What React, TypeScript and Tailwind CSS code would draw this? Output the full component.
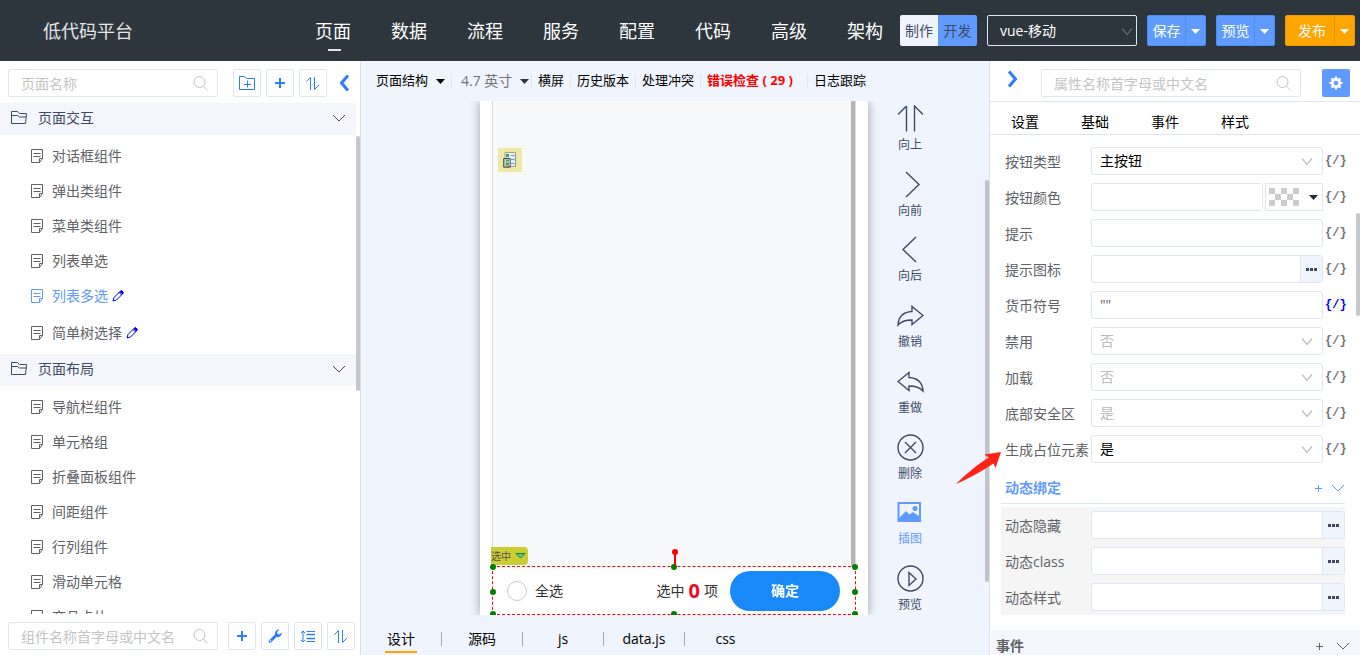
import { useState } from "react";
import type { ReactNode } from "react";
import clsx from "clsx";

const navItems = ["页面", "数据", "流程", "服务", "配置", "代码", "高级", "架构"];

const pageGroups = [
  {
    title: "页面交互",
    pages: [
      { name: "对话框组件" },
      { name: "弹出类组件" },
      { name: "菜单类组件" },
      { name: "列表单选" },
      { name: "列表多选", edited: true },
      { name: "简单树选择", edited: true },
    ],
  },
  {
    title: "页面布局",
    pages: [
      { name: "导航栏组件" },
      { name: "单元格组" },
      { name: "折叠面板组件" },
      { name: "间距组件" },
      { name: "行列组件" },
      { name: "滑动单元格" },
      { name: "商品卡片" },
    ],
  },
];

const editorTabs = ["设计", "源码", "js", "data.js", "css"];
const propertyTabs = ["设置", "基础", "事件", "样式"];
const dynamicProps = ["动态隐藏", "动态class", "动态样式"];

interface IconProps {
  className?: string;
  size?: number;
  box?: number;
  width?: number;
  children?: ReactNode;
}

function Icon({ className, size = 16, box = size, width = 1, children }: IconProps) {
  return (
    <svg
      className={clsx("shrink-0", className)}
      width={size}
      height={size}
      viewBox={`0 0 ${box} ${box}`}
      fill="none"
      stroke="currentColor"
      strokeWidth={width}
      aria-hidden="true"
    >
      {children}
    </svg>
  );
}

function SearchIcon() {
  return (
    <Icon size={16} className="text-[#c0c4cc]">
      <circle cx="6.500" cy="7" r="5.500" />
      <path d="M10.500 11l4 4.500" />
    </Icon>
  );
}

function SortIcon() {
  return (
    <Icon size={16}>
      <path d="M1.500 6.500l4-4V15M9.500 2v12.500L14 10" />
    </Icon>
  );
}

function PlusIcon({ size = 12, width = 2 }: { size?: number; width?: number }) {
  return (
    <Icon size={size} width={width}>
      <path d={size === 12 ? "M6 1v10M1 6h10" : "M4.500 1v7M1 4.500h7"} />
    </Icon>
  );
}

function FolderIcon() {
  return (
    <Icon size={18}>
      <path d="M1.500 14.500v-12h6l2 2h7l-1 10zM1.500 6.500h6l2 1.500h7" />
    </Icon>
  );
}

function FolderPlusIcon() {
  return (
    <Icon size={18}>
      <path d="M1.500 15.500v-13h5l2 2h8v11zM9.500 6.500v7M6 10.500h7" />
    </Icon>
  );
}

function PageIcon() {
  return (
    <Icon size={14}>
      <path d="M1.500.500h11v9l-3 4h-8zM3.500 4.500h7M3.500 7.500h7M12.500 9.500h-3v4" />
    </Icon>
  );
}

function PencilIcon() {
  return (
    <Icon size={12} className="text-[#0000e6]">
      <path d="M1 11l1-3.500 6-6 2.500 2.500-6 6zM7 2.500L9.500 5" />
      <path d="M8 1.500l1.500-1L11.500 2.500l-1 1.500z" fill="currentColor" />
    </Icon>
  );
}

function ChevronDown({ className }: { className?: string }) {
  return (
    <Icon size={14} className={className}>
      <path d="M1 4l6 6 6-6" />
    </Icon>
  );
}

function SelectArrow({ className }: { className?: string }) {
  return (
    <Icon size={12} width={1.2} className={clsx("pointer-events-none absolute top-1/2 -translate-y-1/2", className)}>
      <path d="M1 3.500l5 6 5-6" />
    </Icon>
  );
}

function Caret({ className }: { className?: string }) {
  return (
    <svg className={clsx("shrink-0", className)} width="9" height="5" viewBox="0 0 9 5" fill="currentColor" aria-hidden="true">
      <path d="M0 0h9L4.500 5z" />
    </svg>
  );
}

function Dots() {
  return (
    <svg width="11" height="3" viewBox="0 0 11 3" fill="#3d4a66" aria-hidden="true">
      <path d="M0 0h3v3H0zM4 0h3v3H4zM8 0h3v3H8z" />
    </svg>
  );
}

const tools = [
  { name: "向上", icon: <path d="M1 9.500L9 1.500M26 9.500L17.500 1v25.500M9.500 1v25.500" /> },
  { name: "向前", icon: <path d="M9 1l13 12.500L9 26" /> },
  { name: "向后", icon: <path d="M19 1L6 13.500 19 26" /> },
  {
    name: "撤销",
    icon: <path d="M15 4.500v5C6 10 1.500 15 1 23c3.500-4 7.500-5 14-5v4.500L26 13.500z" />,
  },
  {
    name: "重做",
    icon: <path d="M12 4.500v5c9 .500 13.500 5.500 14 13.500-3.500-4-7.500-5-14-5v4.500L1 13.500z" />,
  },
  {
    name: "删除",
    icon: (
      <>
        <circle cx="13.500" cy="13.500" r="12.500" />
        <path d="M8 8l11 11M19 8L8 19" />
      </>
    ),
  },
  {
    name: "插图",
    active: true,
    icon: (
      <>
        <path d="M1.500 4h21.500v18H1.500z" strokeWidth="2" />
        <path d="M2 19l7-7 3.500 3.500 3.500-2.500 6.500 4.500V22H2z" fill="currentColor" stroke="none" />
        <circle cx="18" cy="9.500" r="2.500" fill="currentColor" stroke="none" />
      </>
    ),
  },
  {
    name: "预览",
    icon: (
      <>
        <circle cx="13.500" cy="13.500" r="12.500" />
        <path d="M12 7.500v13l7-6.500z" />
      </>
    ),
  },
];

function IconButton({ label, children }: { label: string; children: ReactNode }) {
  return (
    <button
      type="button"
      aria-label={label}
      className="flex h-7 w-7 shrink-0 items-center justify-center rounded-xs border border-[#dfe5f2] bg-white text-[#2b7cff]"
    >
      {children}
    </button>
  );
}

function SearchBox({ placeholder, className }: { placeholder: string; className?: string }) {
  return (
    <label className={clsx("flex h-7 items-center rounded-xs border border-[#dfe5f2] bg-white pr-2 pl-3", className)}>
      <input
        type="text"
        aria-label={placeholder}
        placeholder={placeholder}
        className="min-w-0 flex-1 bg-transparent pt-0.5 text-sm outline-none placeholder:text-[#c4c4c4]"
      />
      <SearchIcon />
    </label>
  );
}

function SplitButton({ label, color = "blue" }: { label: string; color?: "blue" | "orange" }) {
  const orange = color === "orange";
  return (
    <div
      className={clsx(
        "flex h-[31px] rounded-xs border text-sm text-white",
        orange ? "border-[#f09a00] bg-[#ffa500]" : "border-[#4a8df8] bg-[#5f9bff]"
      )}
    >
      <button type="button" className={orange ? "w-12 pl-1" : "w-[37px]"}>
        {label}
      </button>
      <button
        type="button"
        aria-label={`${label}选项`}
        className={clsx("flex w-5 items-center justify-center border-l pt-0.5", orange ? "border-[#e89400]" : "border-[#4a8df8]")}
      >
        <Caret />
      </button>
    </div>
  );
}

function Header() {
  return (
    <header className="flex h-[61px] shrink-0 items-center bg-[#2e363d] pr-[5px] text-white">
      <h1 className="ml-[43px] w-[272px] text-lg text-[#e4e6e8]">低代码平台</h1>
      <nav className="flex flex-1 gap-10 text-lg">
        {navItems.map((item, i) => (
          <a key={item} href="#" className="relative w-9 whitespace-nowrap">
            {item}
            {i === 0 && <span className="absolute -bottom-1.5 left-[13px] h-0.5 w-[13px] bg-[#e3e0f2]" />}
          </a>
        ))}
      </nav>
      <div className="flex items-center gap-2.5">
        <div className="flex h-[31px] overflow-hidden rounded-xs text-sm text-[#3d4a66]">
          <button type="button" className="w-[38px] bg-[#f0f4fd]">制作</button>
          <button type="button" className="w-[39px] bg-[#5f9bff]">开发</button>
        </div>
        <div className="relative">
          <select
            aria-label="应用类型"
            className="h-[31px] w-[150px] appearance-none rounded-xs border border-[#dfe5f2] bg-transparent pl-3 text-sm"
          >
            <option>vue-移动</option>
          </select>
          <SelectArrow className="right-1 text-[#626b73]" />
        </div>
        <SplitButton label="保存" />
        <SplitButton label="预览" />
        <SplitButton label="发布" color="orange" />
      </div>
    </header>
  );
}

function PagePanel() {
  const [selected, setSelected] = useState("列表多选");

  return (
    <aside className="relative flex w-[361px] shrink-0 flex-col border-r border-[#dcdfe4] bg-white">
      <div className="flex h-[42px] shrink-0 items-center gap-[5px] pt-0.5 pl-2">
        <SearchBox placeholder="页面名称" className="mr-2.5 w-[210px] shrink-0" />
        <IconButton label="新建目录"><FolderPlusIcon /></IconButton>
        <IconButton label="新建页面"><PlusIcon /></IconButton>
        <IconButton label="排序"><SortIcon /></IconButton>
        <button type="button" aria-label="收起" className="ml-1 text-[#2b7cff]">
          <Icon size={18} width={3}>
            <path d="M12 1.500L5.500 9l6.500 7.500" />
          </Icon>
        </button>
      </div>

      <div className="min-h-0 flex-1 overflow-hidden">
        {pageGroups.map((group) => (
          <section key={group.title}>
            <h2 className="mr-1 flex h-8 items-center bg-[#f4f6fc] px-2.5 pb-0.5 text-sm text-[#3d4a66]">
              <FolderIcon />
              <span className="ml-2.5 flex-1">{group.title}</span>
              <ChevronDown />
            </h2>
            <ul className="pt-[3px] pb-0.5">
              {group.pages.map((page) => (
                <li key={page.name} className={page.edited ? "mb-0.5" : undefined}>
                  <button
                    type="button"
                    onClick={() => setSelected(page.name)}
                    className={clsx(
                      "flex h-[35px] w-full items-center pl-[30px] text-sm",
                      selected === page.name ? "text-[#5f9bff]" : "text-[#606266]"
                    )}
                  >
                    <PageIcon />
                    <span className="mr-1 ml-2">{page.name}</span>
                    {page.edited && <PencilIcon />}
                  </button>
                </li>
              ))}
            </ul>
          </section>
        ))}
      </div>

      <div className="flex h-[41px] shrink-0 items-center gap-[5px] pt-0.5 pr-1 pl-2">
        <SearchBox placeholder="组件名称首字母或中文名" className="mr-[5px] w-[210px] shrink-0" />
        <IconButton label="新建组件"><PlusIcon /></IconButton>
        <IconButton label="设置">
          <Icon size={16}>
            <path
              d="M2 14.500l1.500.500 6-6c2 .500 4.500-.500 5-2.500l.500-2-2.500 2-2-.500-.500-2L12.500 1.500C10 1 8 3 8 5.500L7.500 7 1.500 13z"
              fill="currentColor"
              stroke="none"
            />
            <circle cx="3.500" cy="13" r="0.800" fill="#fff" stroke="none" />
          </Icon>
        </IconButton>
        <IconButton label="行距">
          <Icon size={16}>
            <path d="M3 3v11M1 5l2-2 2 2M1 12l2 2 2-2M6.500 3.500H15M6.500 13.500H15" />
            <path d="M6.500 6.500H15M6.500 10.500H15" strokeWidth="1.500" />
          </Icon>
        </IconButton>
        <IconButton label="排序"><SortIcon /></IconButton>
      </div>

      <div className="absolute top-[75px] right-0 h-[255px] w-1 rounded-full bg-[#c5c7ca]" />
    </aside>
  );
}

function Divider() {
  return <span className="h-3.5 w-px bg-[#dfe5f2]" />;
}

function Toolbar() {
  return (
    <div className="flex h-10 shrink-0 items-center gap-1.5 pl-[15px] text-[13px] whitespace-nowrap text-black">
      <button type="button" className="flex items-center gap-2">
        页面结构
        <Caret />
      </button>
      <Divider />
      <div className="relative -mr-1 ml-[3px]">
        <select aria-label="屏幕尺寸" className="w-[68px] appearance-none bg-transparent text-sm text-[#707378]">
          <option>4.7 英寸</option>
        </select>
        <Caret className="pointer-events-none absolute top-2 right-0 text-[#2e3348]" />
      </div>
      <Divider />
      <button type="button">横屏</button>
      <Divider />
      <button type="button">历史版本</button>
      <Divider />
      <button type="button">处理冲突</button>
      <Divider />
      <button type="button" className="w-[94px] text-left font-bold text-[#ff0000]">错误检查 ( 29 )</button>
      <Divider />
      <button type="button">日志跟踪</button>
    </div>
  );
}

function Handle({ className }: { className: string }) {
  return <span className={clsx("absolute h-1.5 w-1.5 rounded-full bg-[#008000]", className)} />;
}

function Phone() {
  return (
    <div className="flex flex-col bg-white px-3 shadow-[0_0_10px_rgba(0,0,0,0.35)]">
      <div className="relative flex-1 border-r border-l border-[#dcdcdc] bg-[#f7f8fa]">
        <span className="absolute top-[47px] left-[5px] flex h-6 w-6 items-center justify-center bg-[#eee8aa]">
          <svg width="14" height="16" viewBox="0 0 14 16" aria-hidden="true">
            <path d="M2 .500h10.500v14H2z" fill="#e6eef8" stroke="#b0a070" />
            <path d="M8 3.500h3.500M8 7.500h3.500M8 11.500h3.500M12.500 2v13" stroke="#7d93b5" />
            <path d="M.700 6.500h6.500v8.700H.700z" fill="none" stroke="#445" />
            <path d="M3 2h3v3H3zM3 7.500h3v2H3zM3 10.500h3v3H3z" fill="#3aa05c" />
          </svg>
        </span>
        <div className="absolute top-0 right-0 bottom-0 w-1 bg-[#b4b4b4]" />
        <span className="absolute bottom-px -left-[2px] flex h-[18px] w-[37px] items-center gap-1 overflow-hidden rounded-r-sm bg-[#cccc33] text-[10px] leading-none text-[#555]">
          选中
          <svg width="11" height="6" viewBox="0 0 11 6" aria-hidden="true">
            <path d="M1 .500h9L5.500 5z" fill="#5c9" stroke="#178040" />
          </svg>
        </span>
      </div>

      <div className="relative flex h-[49px] items-center border border-dashed border-[#ff0000] bg-white pr-[15px] pl-3.5 text-sm text-[#323233]">
        <label className="flex items-center gap-2">
          <input type="checkbox" className="h-5 w-5 appearance-none rounded-full border border-[#c8c9cc]" />
          全选
        </label>
        <p className="ml-auto flex items-center gap-1">
          选中
          <strong className="text-xl leading-5 text-[#ee0a24]">0</strong>
          项
        </p>
        <button type="button" className="ml-3 h-10 w-[110px] rounded-full bg-[#1989fa] font-bold text-white">
          确定
        </button>

        <Handle className="-top-[3px] -left-[3px]" />
        <Handle className="-top-[3px] left-1/2 -translate-x-1/2" />
        <Handle className="-top-[3px] -right-[3px]" />
        <Handle className="top-[22px] -left-[3px]" />
        <Handle className="top-[22px] -right-[3px]" />
        <Handle className="-bottom-[3px] -left-[3px]" />
        <Handle className="-bottom-[3px] left-1/2 -translate-x-1/2" />
        <Handle className="-bottom-[3px] -right-[3px]" />
        <span className="absolute -top-3.5 left-1/2 h-3 w-0.5 bg-[#ff0000]" />
        <span className="absolute -top-[18px] left-1/2 -ml-0.5 h-1.5 w-1.5 rounded-full bg-[#ff0000]" />
      </div>
    </div>
  );
}

function Workspace() {
  const [tab, setTab] = useState("设计");

  return (
    <main className="relative flex min-w-0 flex-1 flex-col bg-[#f0f4fd]">
      <Toolbar />
      <div className="grid min-h-0 flex-1 grid-cols-[1fr_388px_1fr] overflow-hidden pr-0.5">
        <div />
        <Phone />
        <div className="ml-4 flex w-[52px] flex-col justify-between pt-1 pb-0.5">
          {tools.map((tool) => (
            <button
              key={tool.name}
              type="button"
              className={clsx("flex flex-col items-center text-xs", tool.active ? "text-[#5f9bff]" : "text-[#3d4a66]")}
            >
              <Icon size={27} width={1.4}>{tool.icon}</Icon>
              <span className="mt-[5px]">{tool.name}</span>
            </button>
          ))}
        </div>
      </div>

      <div className="flex h-10 shrink-0 items-center text-sm text-black">
        {editorTabs.map((name, i) => (
          <div key={name} className="flex w-[81px] items-center">
            <button type="button" onClick={() => setTab(name)} className="relative flex-1 pt-2 leading-6">
              {name}
              {tab === name && <span className="absolute -bottom-0.5 left-1/2 h-0.5 w-8 -translate-x-1/2 bg-[#ffa500]" />}
            </button>
            {i < editorTabs.length - 1 && <span className="mt-2 h-3.5 w-px bg-[#aaa]" />}
          </div>
        ))}
      </div>

      <div className="absolute top-[119px] right-0 h-[402px] w-1 rounded-full bg-[#bfc2ca]" />
    </main>
  );
}

interface FieldRowProps {
  id: string;
  label: string;
  bound?: boolean;
  children: ReactNode;
}

function FieldRow({ id, label, bound, children }: FieldRowProps) {
  return (
    <div className="flex h-9 items-center px-[15px]">
      <label htmlFor={id} className="w-[86px] shrink-0 pt-0.5 whitespace-nowrap">{label}</label>
      {children}
      <button
        type="button"
        aria-label={`绑定${label}`}
        className={clsx(
          "w-[22px] pl-0.5 font-['Liberation_Mono',monospace] text-xs font-bold",
          bound ? "text-[#0000ff]" : "text-[#707378]"
        )}
      >
        {"{/}"}
      </button>
    </div>
  );
}

function SelectField({ id, value, disabled }: { id: string; value: string; disabled?: boolean }) {
  return (
    <div className="relative flex-1">
      <select
        id={id}
        disabled={disabled}
        className="block h-7 w-full appearance-none rounded-[3px] border border-[#dfe5f2] bg-white pl-2 text-sm text-black opacity-100 disabled:text-[#bbb]"
      >
        <option>{value}</option>
      </select>
      <SelectArrow className="right-2.5 text-[#b8bcc4]" />
    </div>
  );
}

function TextField({ id, value, picker }: { id: string; value?: string; picker?: boolean }) {
  return (
    <div className="flex h-7 min-w-0 flex-1 overflow-hidden rounded-[3px] border border-[#dfe5f2] bg-white">
      <input id={id} type="text" defaultValue={value} className="min-w-0 flex-1 px-2 text-sm outline-none" />
      {picker && (
        <button
          type="button"
          aria-label="选择"
          className="flex w-[22px] items-center justify-center border-l border-[#dfe5f2] bg-[#f0f4fd]"
        >
          <Dots />
        </button>
      )}
    </div>
  );
}

function PropertyPanel() {
  return (
    <aside className="relative flex w-[371px] shrink-0 flex-col border-l border-[#dcdfe4] bg-white text-sm text-[#606266]">
      <div className="flex h-[41px] shrink-0 items-center border-b border-[#dfe5f2] pt-1 pr-2.5 pl-3.5">
        <button type="button" aria-label="展开" className="mb-2 w-[37px] text-[#2b7cff]">
          <Icon size={18} width={3}>
            <path d="M5 1.500L11.500 9 5 16.500" />
          </Icon>
        </button>
        <SearchBox placeholder="属性名称首字母或中文名" className="flex-1" />
        <button
          type="button"
          aria-label="属性设置"
          className="ml-[21px] flex h-7 w-7 items-center justify-center rounded-xs bg-[#5f9bff] text-white"
        >
          <Icon size={14} width={3}>
            <circle cx="7" cy="7" r="3.700" />
            <path d="M7 .500v2M7 11.500v2M.500 7h2M11.500 7h2M2.500 2.500l1.300 1.300M10.200 10.200l1.300 1.300M2.500 11.500l1.300-1.300M10.200 3.800l1.300-1.300" strokeWidth="2" />
          </Icon>
        </button>
      </div>

      <div className="flex h-[33px] shrink-0 items-center border-b border-[#dfe5f2] pt-2 text-black">
        {propertyTabs.map((name) => (
          <button key={name} type="button" className="w-[70px]">{name}</button>
        ))}
      </div>

      <div className="min-h-0 flex-1 overflow-hidden">
        <div className="pt-2">
          <FieldRow id="type" label="按钮类型">
            <SelectField id="type" value="主按钮" />
          </FieldRow>
          <FieldRow id="color" label="按钮颜色">
            <TextField id="color" />
            <button
              type="button"
              aria-label="选择颜色"
              className="ml-0.5 flex h-7 w-[58px] items-center gap-2.5 border border-[#dfe5f2] pl-[3px] text-[#1f2d3d]"
            >
              <svg width="30" height="18" viewBox="0 0 5 3" fill="#ccc" aria-hidden="true">
                <path d="M0 0h1v1H0zM2 0h1v1H2zM4 0h1v1H4zM1 1h1v1H1zM3 1h1v1H3zM0 2h1v1H0zM2 2h1v1H2zM4 2h1v1H4z" />
              </svg>
              <Caret />
            </button>
          </FieldRow>
          <FieldRow id="tip" label="提示">
            <TextField id="tip" />
          </FieldRow>
          <FieldRow id="tip-icon" label="提示图标">
            <TextField id="tip-icon" picker />
          </FieldRow>
          <FieldRow id="currency" label="货币符号" bound>
            <TextField id="currency" value={'""'} />
          </FieldRow>
          <FieldRow id="disabled" label="禁用">
            <SelectField id="disabled" value="否" disabled />
          </FieldRow>
          <FieldRow id="loading" label="加载">
            <SelectField id="loading" value="否" disabled />
          </FieldRow>
          <FieldRow id="safe-area" label="底部安全区">
            <SelectField id="safe-area" value="是" disabled />
          </FieldRow>
          <FieldRow id="placeholder" label="生成占位元素">
            <SelectField id="placeholder" value="是" />
          </FieldRow>
        </div>

        <section className="mr-[15px] ml-[11px]">
          <h3 className="flex h-[37px] items-center gap-2 border-b border-[#dbe5f8] pt-1.5 pl-1 font-bold text-[#5f9bff]">
            <span className="flex-1">动态绑定</span>
            <PlusIcon size={9} width={1} />
            <ChevronDown />
          </h3>
          <div className="mt-[3px] bg-[#f5f5f5]">
            {dynamicProps.map((name) => (
              <div key={name} className="flex h-9 items-center pl-1">
                <label htmlFor={name} className="w-[86px] pt-0.5">{name}</label>
                <TextField id={name} picker />
              </div>
            ))}
          </div>
        </section>

        <h3 className="mt-[15px] ml-px flex h-8 items-center gap-3 bg-[#f4f6fc] pr-2.5 pl-[5px] font-bold">
          <span className="flex-1">事件</span>
          <PlusIcon size={9} width={1} />
          <ChevronDown />
        </h3>
      </div>

      <div className="absolute top-[152px] right-0 h-[103px] w-1 rounded-full bg-[#c5c7ca]" />

      {/* pointer to the placeholder option */}
      <svg className="absolute top-[389px] -left-[34px]" width="46" height="35" viewBox="0 0 46 35" fill="#ff2216" aria-hidden="true">
        <path d="M0 34C10 24 22 14 33 7.500L28.500 4.500 45 2 39.500 18 37.500 13.500C26 21 12 29 0 34z" />
      </svg>
    </aside>
  );
}

export default function App() {
  return (
    <div
      lang="zh-CN"
      className="flex h-screen min-w-[1240px] flex-col overflow-hidden font-['Open_Sans','Noto_Sans_CJK_SC',sans-serif]"
    >
      <Header />
      <div className="flex min-h-0 flex-1">
        <PagePanel />
        <Workspace />
        <PropertyPanel />
      </div>
    </div>
  );
}
